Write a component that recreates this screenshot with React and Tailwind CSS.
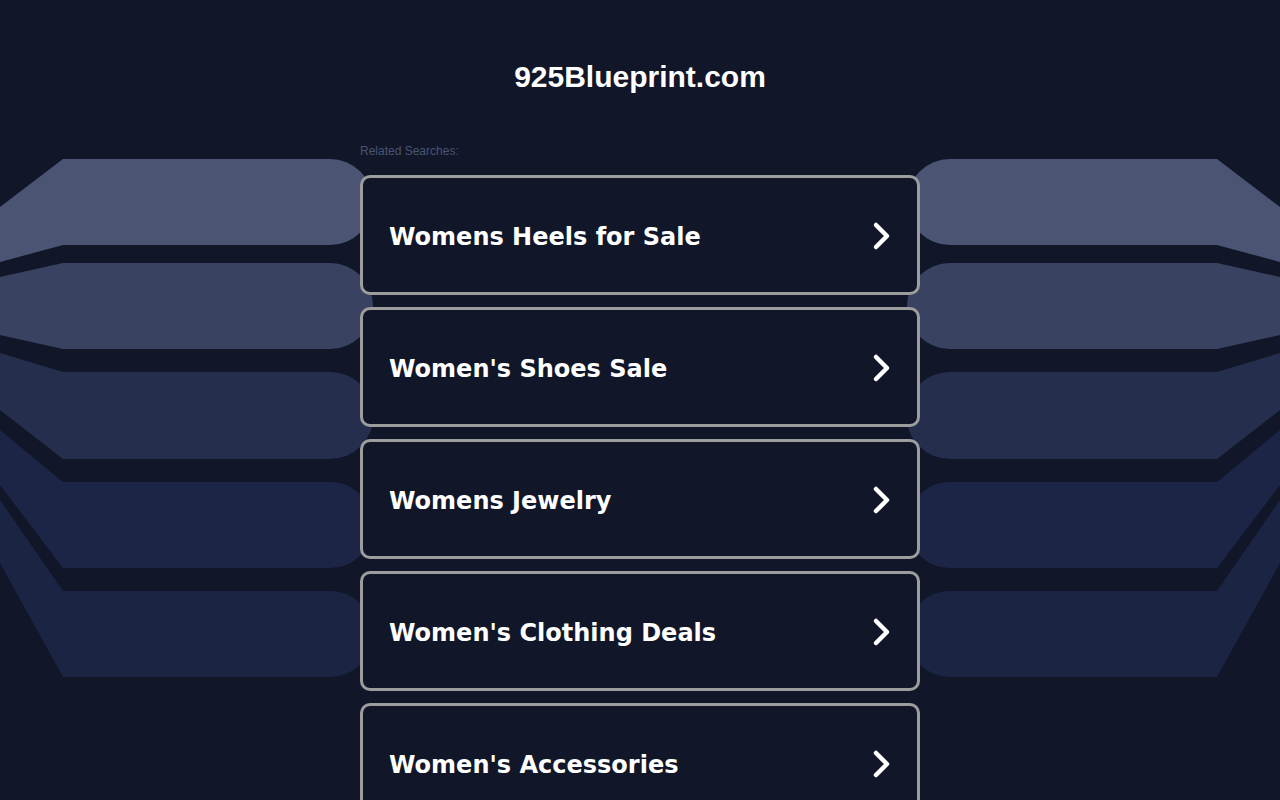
import React from "react";

const searches = [
  "Womens Heels for Sale",
  "Women's Shoes Sale",
  "Womens Jewelry",
  "Women's Clothing Deals",
  "Women's Accessories",
];

// left-side band outlines: [leftTop, top, bottom, leftBottom, fill]
const bands = [
  [207, 159, 245, 262, "#4b5573"],
  [277, 263, 349, 335, "#3a4261"],
  [353, 372, 459, 410, "#262e4d"],
  [430, 482, 568, 485, "#1d2546"],
  [500, 591, 677, 563, "#1c2444"],
];

function Backdrop() {
  return (
    <svg className="absolute inset-0 w-full h-full" viewBox="0 0 1280 800" preserveAspectRatio="none">
      {bands.map(([lt, t, b, lb, fill], i) => {
        const r = (b - t) / 2;
        return (
          <g key={i} fill={fill}>
            <path d={`M0 ${lt} L63 ${t} L330 ${t} A${r} ${r} 0 0 1 330 ${b} L63 ${b} L0 ${lb} Z`} />
            <path d={`M1280 ${lt} L1217 ${t} L950 ${t} A${r} ${r} 0 0 0 950 ${b} L1217 ${b} L1280 ${lb} Z`} />
          </g>
        );
      })}
    </svg>
  );
}

function Chevron() {
  return (
    <svg className="mt-[2px]" width="20" height="30" viewBox="0 0 20 30" fill="none" stroke="white" strokeWidth="4.5" strokeLinecap="round" strokeLinejoin="round">
      <path d="M4 4 L15 15 L4 26" />
    </svg>
  );
}

export default function App() {
  return (
    <div className="relative w-full h-[800px] overflow-hidden bg-[#111729]">
      <Backdrop />
      <div className="relative w-[560px] mx-auto pt-[58px]">
        <h1 className="text-center text-white font-bold text-[30px] leading-[38px] font-['Liberation_Sans',Arial,sans-serif]">
          925Blueprint.com
        </h1>
        <div className="mt-[47px] text-[12px] leading-4 text-[#4a5472] font-['Liberation_Sans',Arial,sans-serif]">
          Related Searches:
        </div>
        <div className="mt-4 flex flex-col gap-3">
          {searches.map((s) => (
            <a
              key={s}
              href="#"
              className="flex items-center justify-between h-[120px] rounded-[10px] border-[3px] border-[#9d9d9d] bg-[#111729] pl-[26px] pr-[25px]"
            >
              <span className="pt-[4px] text-white font-bold text-[24px] font-['DejaVu_Sans',Verdana,sans-serif]">{s}</span>
              <Chevron />
            </a>
          ))}
        </div>
      </div>
    </div>
  );
}
